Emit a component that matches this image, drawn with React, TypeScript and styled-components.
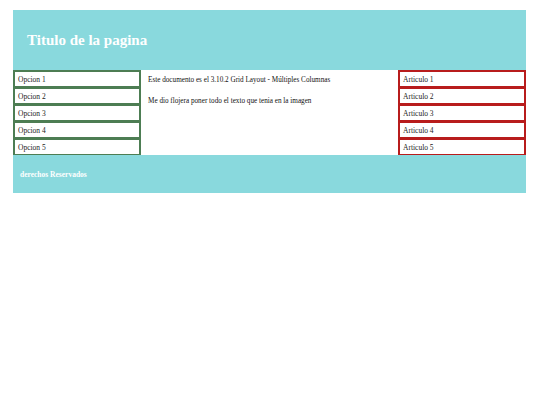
import React from 'react';
import styled, { createGlobalStyle } from 'styled-components';

const GlobalStyle = createGlobalStyle`
  html, body {
    margin: 0;
    padding: 0;
    background: #ffffff;
    font-family: "Liberation Serif", "Times New Roman", serif;
  }
`

const Page = styled.div`
  padding: 10px 14px 0 13px;
`

const Layout = styled.div`
  display: grid;
  grid-template-columns: 128px 1fr 128px;
  grid-template-rows: 60px auto 38px;
  grid-template-areas:
    "header header header"
    "nav main aside"
    "footer footer footer";
  width: 513px;
`

const Header = styled.header`
  grid-area: header;
  background: #89d9dd;
  display: flex;
  align-items: center;
  padding-left: 14px;
`

const Title = styled.h1`
  margin: 0;
  font-size: 15px;
  font-weight: bold;
  color: #ffffff;
`

const Column = styled.div<{ $area: string }>`
  grid-area: ${(p) => p.$area};
  display: flex;
  flex-direction: column;
`

const Item = styled.div<{ $tone: string }>`
  height: 17px;
  box-sizing: border-box;
  border: 2px solid ${(p) => p.$tone};
  border-bottom-width: 1.5px;
  display: flex;
  align-items: center;
  padding-left: 3px;
  font-size: 7.5px;
  color: #222;
  background: #fff;
`

const Main = styled.main`
  grid-area: main;
  padding: 6px 7px;
`

const Text = styled.p`
  margin: 0 0 13px;
  font-size: 7.2px;
  color: #111;
`

const Footer = styled.footer`
  grid-area: footer;
  background: #89d9dd;
  display: flex;
  align-items: center;
  padding-left: 7px;
  font-size: 7.5px;
  font-weight: bold;
  color: #ffffff;
`

const opciones = ['Opcion 1', 'Opcion 2', 'Opcion 3', 'Opcion 4', 'Opcion 5']
const articulos = ['Articulo 1', 'Articulo 2', 'Articulo 3', 'Articulo 4', 'Articulo 5']

const App: React.FC = () => {
  return (
    <React.Fragment>
      <GlobalStyle />
      <Page>
        <Layout>
          <Header>
            <Title>Titulo de la pagina</Title>
          </Header>
          <Column $area="nav">
            {opciones.map((o) => (
              <Item key={o} $tone="#4d7d53">{o}</Item>
            ))}
          </Column>
          <Main>
            <Text>Este documento es el 3.10.2 Grid Layout - Múltiples Columnas</Text>
            <Text>Me dio flojera poner todo el texto que tenia en la imagen</Text>
          </Main>
          <Column $area="aside">
            {articulos.map((a) => (
              <Item key={a} $tone="#b81c1c">{a}</Item>
            ))}
          </Column>
          <Footer>derechos Reservados</Footer>
        </Layout>
      </Page>
    </React.Fragment>
  );
};

export default App;
